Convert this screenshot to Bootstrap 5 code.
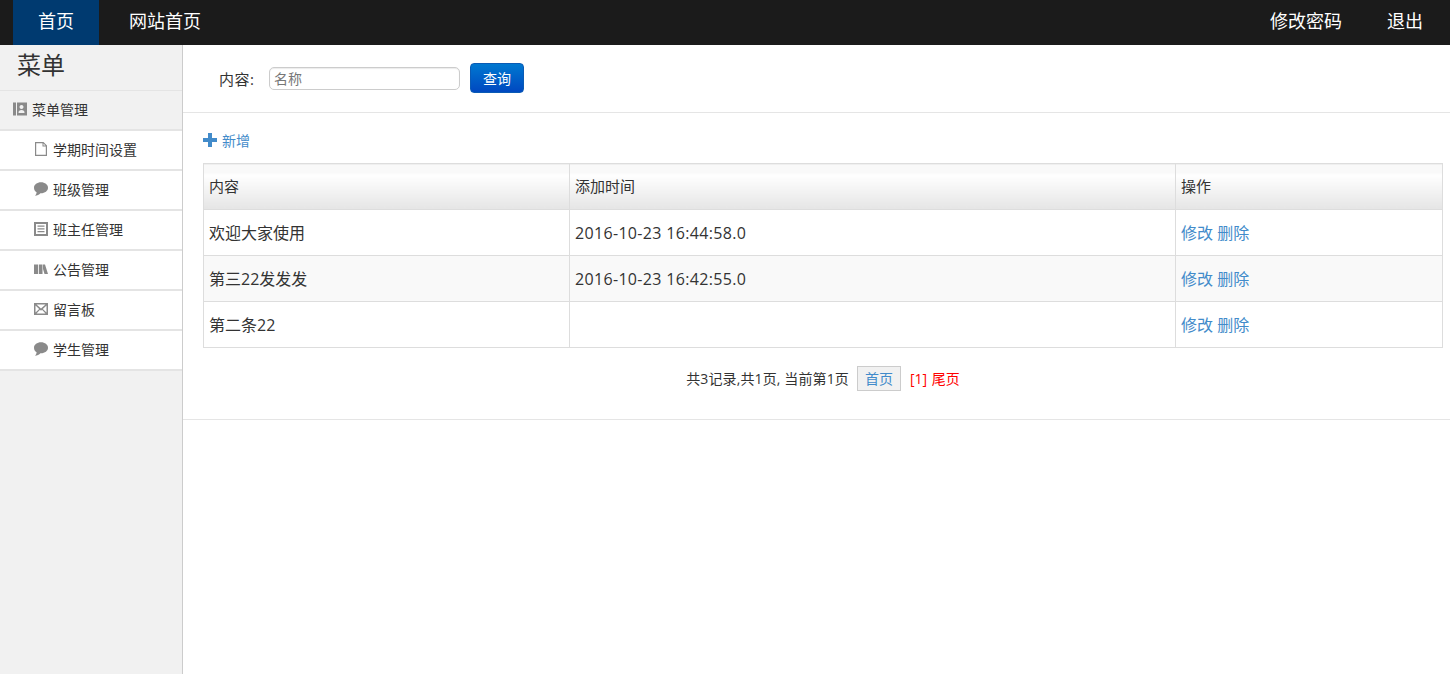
<!DOCTYPE html>
<html lang="zh-CN"><head><meta charset="utf-8"><title>菜单</title>
<link href="https://cdn.jsdelivr.net/npm/bootstrap@5.3.0/dist/css/bootstrap.min.css" rel="stylesheet">
<style>
html,body{height:100%;overflow:hidden}
body{font-family:"Open Sans","Noto Sans CJK SC",sans-serif;font-size:14px;color:#333;background:#fff;display:flex;flex-direction:column;height:674px}
a{text-decoration:none}
.topbar{height:45px;background:#1b1b1b;padding:0 27px 0 13px;flex:none}
.topbar a{color:#fff;font-size:18px;line-height:42px;height:45px;display:block}
.top-active{background:#003a70;width:86px;text-align:center}
.top-site{margin-left:30px}
.top-pass{margin-right:45px}
.shell{flex:1;min-height:0}
.sidebar{width:183px;background:#f1f1f1;border-right:1px solid #ccc;flex:none}
.side-title{height:46px;font-size:24px;line-height:40px;padding-left:17px;border-bottom:1px solid #e4e4e4;color:#333}
.side-head{height:40px;padding-left:13px;padding-bottom:2px;border-bottom:2px solid #e4e4e4;color:#333;gap:5px}
.side-item{height:40px;padding-left:34px;padding-bottom:2px;background:#fff;border-bottom:2px solid #e4e4e4;color:#333;gap:5px}
.side-item svg,.side-head svg{width:14px;height:14px;flex:none;fill:#8a8a8a}
.mainpane{flex:1;min-width:0}
.searchbar{height:68px;border-bottom:1px solid #e5e5e5;padding:18px 0 0 36px}
.searchbar label{font-size:15px;width:50px;color:#333;height:32px;letter-spacing:.5px}
.name-input{width:191px;height:23px;border:1px solid #ccc;border-radius:5px;padding:0 4px;font-size:14px;color:#777;box-shadow:inset 0 1px 1px rgba(0,0,0,.08)}
.name-input::placeholder{color:#777}
.query-btn{width:54px;height:30px;margin-left:10px;padding:0;border:1px solid #0a5bb5;border-radius:4px;color:#fff;font-size:14px;background:linear-gradient(#0078d0,#0048c0)}
.listarea{padding:0 7px 0 20px;height:307px;border-bottom:1px solid #e5e5e5}
.addlink{height:50px;color:#428bca;font-size:14px;gap:5px;padding-top:4px}
.addlink svg{width:14px;height:14px;fill:#428bca}
.data-grid{width:100%;table-layout:fixed;border-collapse:collapse;border:1px solid #ddd;margin:0}
.data-grid th,.data-grid td{border:1px solid #ddd;padding:0 5px;vertical-align:middle}
.data-grid th{height:46px;font-weight:400;font-size:15px;color:#333;background:linear-gradient(#f9f9f9 0,#f9f9f9 9px,#fff 10px,#e5e5e5 100%)}
.data-grid td{height:46px;font-size:16px;color:#333}
.data-grid .alt td{background:#f9f9f9}
.data-grid a{color:#428bca}
.col-content{width:366px}
.col-time{width:606px}
.stamp{letter-spacing:.33px}
.pager-row{height:60px;font-size:14px;gap:0}
.pager-text{letter-spacing:.13px}
.pg-first{display:inline-block;width:44px;height:25px;line-height:23px;margin:0 9px 0 8px;text-align:center;background:#f1f1f1;border:1px solid #ccc;color:#428bca}
.pg-red{color:#f00;word-spacing:1px}
</style></head><body>
<nav class="topbar d-flex align-items-start">
<a class="top-active" href="#">首页</a><a class="top-site" href="#">网站首页</a>
<div class="ms-auto d-flex"><a class="top-pass" href="#">修改密码</a><a href="#">退出</a></div>
</nav>
<div class="shell d-flex">
<aside class="sidebar">
<div class="side-title">菜单</div>
<div class="side-head d-flex align-items-center"><svg viewBox="0 0 14 14"><path fill-rule="evenodd" d="M0 .5h14v13H0zM3 .5v13h1V.5zM8.500 3a2 2 0 1 0 .01 0zM5.500 11c0-2.300 1-3 3-3s3 .7 3 3z"/></svg><span>菜单管理</span></div>
<div class="side-item d-flex align-items-center"><svg viewBox="0 0 14 14"><path fill-rule="evenodd" d="M1 0h8.500L13 3.500V14H1zM2.200 1.200v11.600h9.600V4.500H8.500V1.200zM9.500 1.500v2h2z"/></svg><span>学期时间设置</span></div>
<div class="side-item d-flex align-items-center"><svg viewBox="0 0 14 14"><path d="M7 .2c3.900 0 7 2.400 7 5.500s-3.100 5.500-7 5.500h-.6C5.200 12.500 3.200 13.800 1 13.800c.9-.8 1.500-2 1.600-3.500C1 9.300 0 7.600 0 5.700 0 2.600 3.100.2 7 .2z"/></svg><span>班级管理</span></div>
<div class="side-item d-flex align-items-center"><svg viewBox="0 0 14 14"><path fill-rule="evenodd" d="M0 0h14v14H0zM2 2v10h10V2zM3.500 3.500h7v1.200h-7zM3.500 6.300h7v1.200h-7zM3.500 9.100h7v1.200h-7z"/></svg><span>班主任管理</span></div>
<div class="side-item d-flex align-items-center"><svg viewBox="0 0 14 14"><path d="M0 2.500h4V12H0zM4.800 2.500h3.700V12H4.800zM9 2.500h2L14 12h-3.500L9 7z"/></svg><span>公告管理</span></div>
<div class="side-item d-flex align-items-center"><svg viewBox="0 0 14 14"><path fill-rule="evenodd" d="M0 1h14v12H0zM2.500 2.500 7 6.500l4.500-4zM1.500 3.500v7L5.200 7zM12.500 3.500 8.800 7l3.700 3.500zM6 7.800l-3.500 3.700h9L8 7.800l-1 .9z"/></svg><span>留言板</span></div>
<div class="side-item d-flex align-items-center"><svg viewBox="0 0 14 14"><path d="M7 .2c3.900 0 7 2.400 7 5.500s-3.100 5.500-7 5.500h-.6C5.200 12.500 3.200 13.800 1 13.800c.9-.8 1.500-2 1.600-3.500C1 9.300 0 7.600 0 5.700 0 2.600 3.100.2 7 .2z"/></svg><span>学生管理</span></div>
</aside>
<main class="mainpane">
<form class="searchbar d-flex align-items-start" onsubmit="return false">
<label class="d-flex align-items-center">内容:</label>
<input class="name-input mt-1" type="text" placeholder="名称">
<button class="query-btn" type="button">查询</button>
</form>
<div class="listarea">
<a class="addlink d-flex align-items-center" href="#"><svg viewBox="0 0 14 14"><path d="M5 0h4v5h5v4H9v5H5V9H0V5h5z"/></svg><span>新增</span></a>
<table class="data-grid">
<colgroup><col class="col-content"><col class="col-time"><col></colgroup>
<thead><tr><th>内容</th><th>添加时间</th><th>操作</th></tr></thead>
<tbody>
<tr><td>欢迎大家使用</td><td class="stamp">2016-10-23 16:44:58.0</td><td><a href="#">修改</a> <a href="#">删除</a></td></tr>
<tr class="alt"><td>第三22发发发</td><td class="stamp">2016-10-23 16:42:55.0</td><td><a href="#">修改</a> <a href="#">删除</a></td></tr>
<tr><td>第二条22</td><td></td><td><a href="#">修改</a> <a href="#">删除</a></td></tr>
</tbody></table>
<div class="pager-row d-flex align-items-center justify-content-center"><span class="pager-text">共3记录,共1页, 当前第1页</span><a class="pg-first" href="#">首页</a><span class="pg-red">[1] 尾页</span></div>
</div>
</main>
</div>
<script src="https://cdn.jsdelivr.net/npm/bootstrap@5.3.0/dist/js/bootstrap.bundle.min.js"></script>
</body></html>
